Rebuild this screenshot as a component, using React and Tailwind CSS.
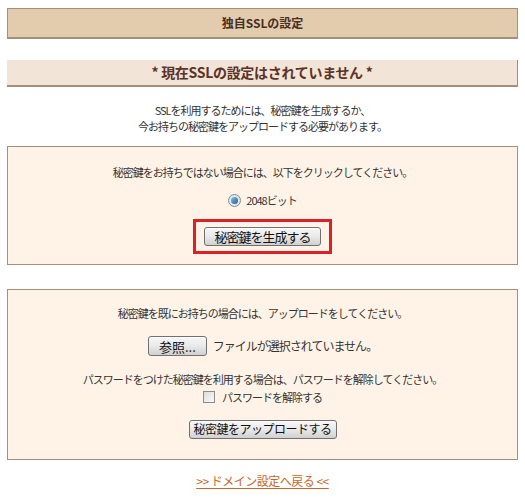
import React from "react";

const font = { fontFamily: '"MS UI Gothic", "Noto Sans CJK JP", sans-serif' };

function Btn({ children, className = "" }) {
  return (
    <button
      className={`inline-flex items-center justify-center whitespace-nowrap h-[19px] px-[4px] rounded-[3px] border border-[#707070] bg-gradient-to-b from-[#f7f7f7] via-[#e9e9e9] to-[#d0d0d0] text-[12px] leading-none text-[#111] shadow-[inset_0_1px_0_#fff] ${className}`}
    >
      {children}
    </button>
  );
}

export default function App() {
  return (
    <div className="w-[525px] h-[501px] bg-white text-[11px] tracking-[-1px] text-[#333] px-[7px] pt-[8px]" style={font}>
      <div className="h-[31px] bg-[#e3ccae] border border-[#a68f76] border-b-2 flex items-center justify-center font-bold text-[12px] tracking-normal text-[#4a2e22]">
        独自SSLの設定
      </div>

      <div className="mt-[21px] h-[27px] bg-[#f2e4d6] border-r border-b-2 border-[#a68f76] flex items-center justify-center font-bold text-[14px] tracking-[-0.3px] text-[#5b3326]">
        * 現在SSLの設定はされていません *
      </div>

      <div className="mt-[15px] text-center leading-[16px]">
        <p>SSLを利用するためには、秘密鍵を生成するか、</p>
        <p>今お持ちの秘密鍵をアップロードする必要があります。</p>
      </div>

      <div className="mt-[12px] h-[119px] bg-[#fff3e7] border border-[#a68f76] flex flex-col items-center pt-[17px]">
        <p className="leading-[16px]">秘密鍵をお持ちではない場合には、以下をクリックしてください。</p>
        <div className="mt-[13px] flex items-center gap-[5px] h-[14px]">
          <span className="w-[13px] h-[13px] rounded-full border border-[#8a8a8a] bg-[#e6e6e6] flex items-center justify-center">
            <span className="w-[7px] h-[7px] rounded-full bg-gradient-to-br from-[#7fc3f0] to-[#1c5f9a]" />
          </span>
          <span className="text-[11px]">2048ビット</span>
        </div>
        <div className="mt-[12px] border-[3px] border-[#dd1f26] px-[8px] py-[5px] flex">
          <Btn className="w-[117px] text-[13px]">秘密鍵を生成する</Btn>
        </div>
      </div>

      <div className="mt-[24px] h-[171px] bg-[#fff3e7] border border-[#a68f76] flex flex-col items-center pt-[15px]">
        <p className="leading-[16px]">秘密鍵を既にお持ちの場合には、アップロードをしてください。</p>
        <div className="mt-[15px] flex items-center gap-[6px]">
          <Btn className="w-[59px] h-[20px] text-[13px] tracking-normal">参照...</Btn>
          <span className="text-[12px]">ファイルが選択されていません。</span>
        </div>
        <p className="mt-[15px] leading-[16px]">パスワードをつけた秘密鍵を利用する場合は、パスワードを解除してください。</p>
        <div className="mt-[2px] flex items-center gap-[7px]">
          <span className="w-[12px] h-[12px] border border-[#8c8c8c] bg-gradient-to-br from-[#dcdcdc] to-[#fafafa]" />
          <span>パスワードを解除する</span>
        </div>
        <Btn className="mt-[14px] w-[148px] tracking-[-0.5px]">秘密鍵をアップロードする</Btn>
      </div>

      <div className="mt-[12px] text-center">
        <a href="#" className="text-[12px] tracking-[-0.5px] text-[#c8672a] underline underline-offset-2">
          &gt;&gt; ドメイン設定へ戻る &lt;&lt;
        </a>
      </div>
    </div>
  );
}
